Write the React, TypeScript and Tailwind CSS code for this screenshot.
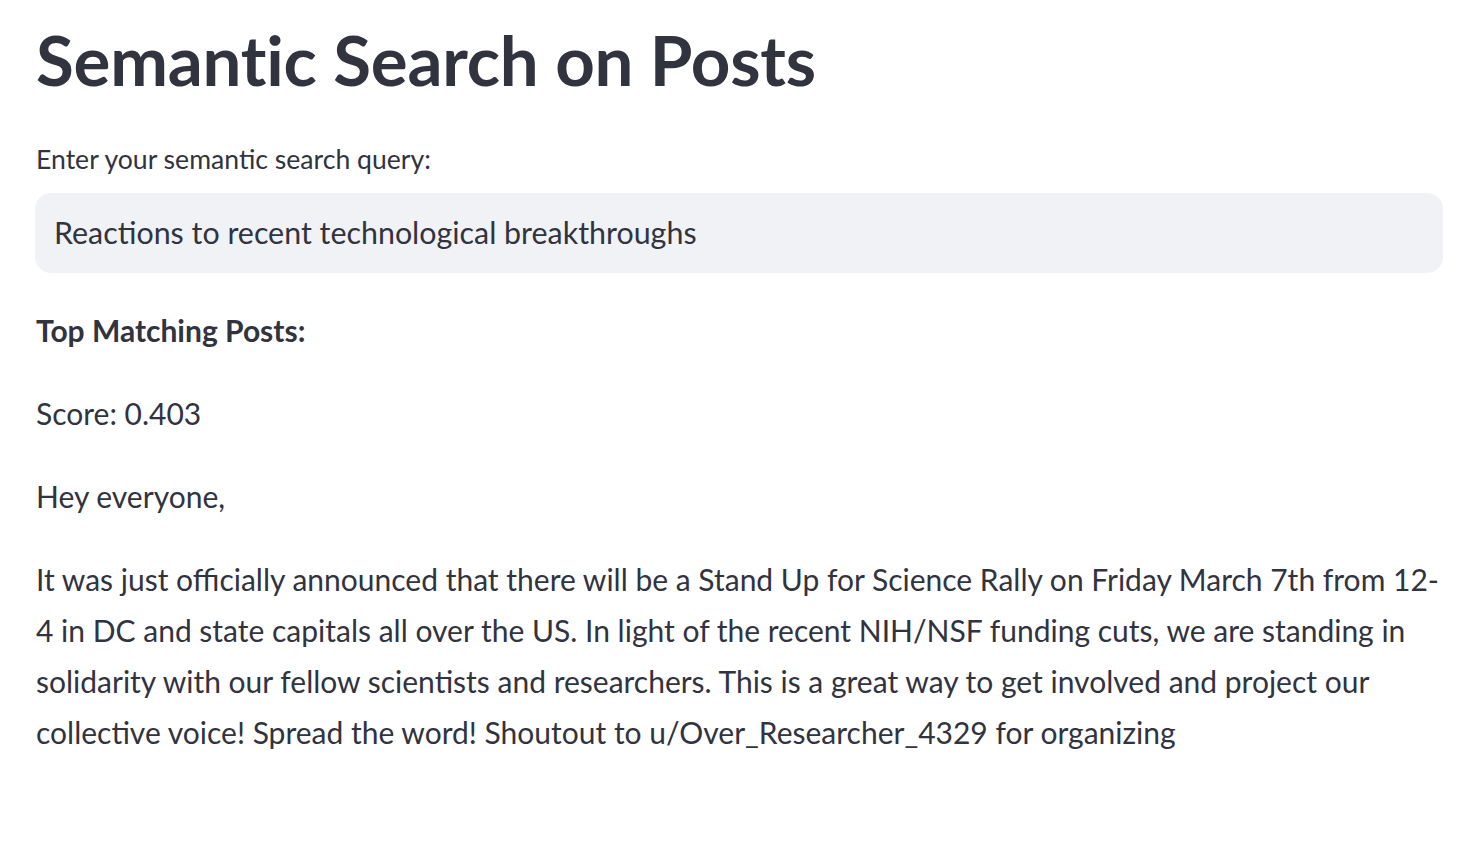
import React from 'react';

const query = 'Reactions to recent technological breakthroughs';

export default function App() {
  return (
    <div className="min-h-screen bg-white text-[#31333f] font-['Lato',sans-serif]">
      <main className="pl-[36px] pr-[37px] pt-[19px]">
        {/* Title */}
        <h1 className="text-[69px] font-bold leading-[1.2] tracking-[-0.2px]">Semantic Search on Posts</h1>

        {/* Query input */}
        <label className="block mt-[39px] text-[26.6px] leading-[36px]">Enter your semantic search query:</label>
        <div className="mt-[16px] -ml-px h-[80px] rounded-[16px] bg-[#f0f2f6] flex items-center pl-[19px] text-[30.4px]">
          {query}
        </div>

        {/* Results */}
        <div className="mt-[32px] flex flex-col gap-[32px] text-[30px] leading-[51px]">
          <p className="font-bold">Top Matching Posts:</p>
          <p>Score: 0.403</p>
          <p>Hey everyone,</p>
          <p>
            It was just officially announced that there will be a Stand Up for Science Rally on Friday March 7th from 12-<wbr />4 in DC and state capitals all over the US. In light of the recent NIH/NSF funding cuts, we are standing in solidarity with our fellow scientists and researchers. This is a great way to get involved and project our collective voice! Spread the word! Shoutout to u/Over_Researcher_4329 for organizing
          </p>
        </div>
      </main>
    </div>
  );
}
